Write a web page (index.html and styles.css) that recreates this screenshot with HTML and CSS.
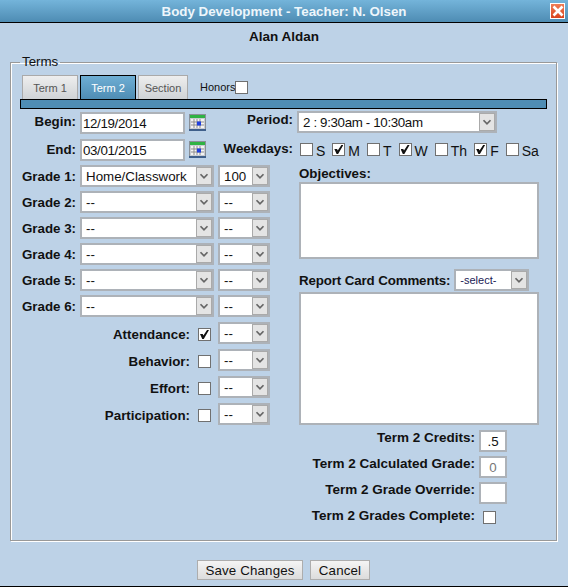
FILE: index.html
```html
<!DOCTYPE html>
<html lang="en">

<head>
    <meta charset="UTF-8">
    <title>Body Development - Teacher: N. Olsen</title>
    <link rel="stylesheet" href="styles.css">
</head>

<body>
    <div class="dialog">
        <div class="titlebar">
            <span class="title">Body Development - Teacher: N. Olsen</span>
            <button class="close" type="button" aria-label="Close">
                <svg width="12" height="12" viewBox="0 0 12 12">
                    <path d="M1.5 1.5 L10.5 10.5 M10.5 1.5 L1.5 10.5" stroke="#fff" stroke-width="2.6" fill="none" />
                </svg>
            </button>
        </div>

        <div class="student">Alan Aldan</div>

        <fieldset class="terms">
            <legend>Terms</legend>

            <div class="tabs">
                <a class="tab tab1" href="#">Term 1</a>
                <a class="tab tab2 active" href="#">Term 2</a>
                <a class="tab tab3" href="#">Section</a>
                <label class="honors">Honors <input type="checkbox"></label>
            </div>
            <div class="tabbar"></div>

            <!-- dates, period and weekdays -->
            <div class="toprow">
                <label class="lbl">Begin:</label>
                <input class="text date begin" type="text" value="12/19/2014">
                <svg class="cal begin" width="17" height="17" viewBox="0 0 17 17">
                    <rect x="0.5" y="0.5" width="16" height="16" fill="#c8ccd2" stroke="#8a9098" />
                    <rect x="1" y="1" width="15" height="3" fill="#2fb344" />
                    <rect x="2" y="5" width="13" height="9" fill="#f4f4f4" />
                    <path d="M5 5V14 M8 5V14 M11 5V14 M2 8H15 M2 11H15" stroke="#8d8d8d" stroke-width="1" />
                    <rect x="8" y="7.5" width="4" height="4" fill="#1f3fe0" />
                    <rect x="0" y="15" width="17" height="2" fill="#3f5f8a" />
                </svg>
                <label class="lbl right period-lbl">Period:</label>
                <div class="sel period">
                    <select>
                        <option>2 : 9:30am - 10:30am</option>
                    </select>
                    <svg class="arrow" width="16" height="18" viewBox="0 0 16 18"><path d="M4 7 L8 11 L12 7" /></svg>
                </div>
            </div>

            <div class="toprow second">
                <label class="lbl">End:</label>
                <input class="text date" type="text" value="03/01/2015">
                <svg class="cal" width="17" height="17" viewBox="0 0 17 17">
                    <rect x="0.5" y="0.5" width="16" height="16" fill="#c8ccd2" stroke="#8a9098" />
                    <rect x="1" y="1" width="15" height="3" fill="#2fb344" />
                    <rect x="2" y="5" width="13" height="9" fill="#f4f4f4" />
                    <path d="M5 5V14 M8 5V14 M11 5V14 M2 8H15 M2 11H15" stroke="#8d8d8d" stroke-width="1" />
                    <rect x="8" y="7.5" width="4" height="4" fill="#1f3fe0" />
                    <rect x="0" y="15" width="17" height="2" fill="#3f5f8a" />
                </svg>
                <label class="lbl right weekdays-lbl">Weekdays:</label>
                <div class="weekdays">
                    <label><input type="checkbox">S</label>
                    <label><input type="checkbox" checked>M</label>
                    <label><input type="checkbox">T</label>
                    <label><input type="checkbox" checked>W</label>
                    <label><input type="checkbox">Th</label>
                    <label><input type="checkbox" checked>F</label>
                    <label><input type="checkbox">Sa</label>
                </div>
            </div>

            <div class="columns">
                <div class="leftcol">
                    <div class="grade">
                        <label class="lbl">Grade 1:</label>
                        <div class="sel wide"><select><option>Home/Classwork</option></select><svg class="arrow" width="16" height="18" viewBox="0 0 16 18"><path d="M4 7 L8 11 L12 7" /></svg></div>
                        <div class="sel small"><select><option>100</option></select><svg class="arrow" width="16" height="18" viewBox="0 0 16 18"><path d="M4 7 L8 11 L12 7" /></svg></div>
                    </div>
                    <div class="grade">
                        <label class="lbl">Grade 2:</label>
                        <div class="sel wide"><select><option>--</option></select><svg class="arrow" width="16" height="18" viewBox="0 0 16 18"><path d="M4 7 L8 11 L12 7" /></svg></div>
                        <div class="sel small"><select><option>--</option></select><svg class="arrow" width="16" height="18" viewBox="0 0 16 18"><path d="M4 7 L8 11 L12 7" /></svg></div>
                    </div>
                    <div class="grade">
                        <label class="lbl">Grade 3:</label>
                        <div class="sel wide"><select><option>--</option></select><svg class="arrow" width="16" height="18" viewBox="0 0 16 18"><path d="M4 7 L8 11 L12 7" /></svg></div>
                        <div class="sel small"><select><option>--</option></select><svg class="arrow" width="16" height="18" viewBox="0 0 16 18"><path d="M4 7 L8 11 L12 7" /></svg></div>
                    </div>
                    <div class="grade">
                        <label class="lbl">Grade 4:</label>
                        <div class="sel wide"><select><option>--</option></select><svg class="arrow" width="16" height="18" viewBox="0 0 16 18"><path d="M4 7 L8 11 L12 7" /></svg></div>
                        <div class="sel small"><select><option>--</option></select><svg class="arrow" width="16" height="18" viewBox="0 0 16 18"><path d="M4 7 L8 11 L12 7" /></svg></div>
                    </div>
                    <div class="grade">
                        <label class="lbl">Grade 5:</label>
                        <div class="sel wide"><select><option>--</option></select><svg class="arrow" width="16" height="18" viewBox="0 0 16 18"><path d="M4 7 L8 11 L12 7" /></svg></div>
                        <div class="sel small"><select><option>--</option></select><svg class="arrow" width="16" height="18" viewBox="0 0 16 18"><path d="M4 7 L8 11 L12 7" /></svg></div>
                    </div>
                    <div class="grade">
                        <label class="lbl">Grade 6:</label>
                        <div class="sel wide"><select><option>--</option></select><svg class="arrow" width="16" height="18" viewBox="0 0 16 18"><path d="M4 7 L8 11 L12 7" /></svg></div>
                        <div class="sel small"><select><option>--</option></select><svg class="arrow" width="16" height="18" viewBox="0 0 16 18"><path d="M4 7 L8 11 L12 7" /></svg></div>
                    </div>

                    <div class="skills">
                        <div class="skill">
                            <label class="lbl">Attendance:</label>
                            <input type="checkbox" checked>
                            <div class="sel small"><select><option>--</option></select><svg class="arrow" width="16" height="18" viewBox="0 0 16 18"><path d="M4 7 L8 11 L12 7" /></svg></div>
                        </div>
                        <div class="skill">
                            <label class="lbl">Behavior:</label>
                            <input type="checkbox">
                            <div class="sel small"><select><option>--</option></select><svg class="arrow" width="16" height="18" viewBox="0 0 16 18"><path d="M4 7 L8 11 L12 7" /></svg></div>
                        </div>
                        <div class="skill">
                            <label class="lbl">Effort:</label>
                            <input type="checkbox">
                            <div class="sel small"><select><option>--</option></select><svg class="arrow" width="16" height="18" viewBox="0 0 16 18"><path d="M4 7 L8 11 L12 7" /></svg></div>
                        </div>
                        <div class="skill">
                            <label class="lbl">Participation:</label>
                            <input type="checkbox">
                            <div class="sel small"><select><option>--</option></select><svg class="arrow" width="16" height="18" viewBox="0 0 16 18"><path d="M4 7 L8 11 L12 7" /></svg></div>
                        </div>
                    </div>
                </div>

                <div class="rightcol">
                    <label class="lbl objectives-lbl">Objectives:</label>
                    <textarea class="objectives"></textarea>

                    <div class="comments-head">
                        <label class="lbl">Report Card Comments:</label>
                        <div class="sel comment-sel"><select><option>-select-</option></select><svg class="arrow" width="16" height="18" viewBox="0 0 16 18"><path d="M4 7 L8 11 L12 7" /></svg></div>
                    </div>
                    <textarea class="comments"></textarea>

                    <div class="credit">
                        <label class="lbl">Term 2 Credits:</label>
                        <input class="text num" type="text" value=".5">
                    </div>
                    <div class="credit">
                        <label class="lbl">Term 2 Calculated Grade:</label>
                        <input class="text num calc" type="text" value="0" readonly>
                    </div>
                    <div class="credit">
                        <label class="lbl">Term 2 Grade Override:</label>
                        <input class="text num" type="text">
                    </div>
                    <div class="credit complete">
                        <label class="lbl">Term 2 Grades Complete:</label>
                        <input type="checkbox">
                    </div>
                </div>
            </div>
        </fieldset>

        <div class="footer">
            <button class="btn save" type="button">Save Changes</button>
            <button class="btn cancel" type="button">Cancel</button>
        </div>
    </div>
</body>

</html>
```

FILE: styles.css
```css
html,
body {
    margin: 0;
    padding: 0;
}

body {
    background-color: #bdd2e7;
    color: #111;
    font-family: "Liberation Sans", Arial, sans-serif;
    font-size: 13.33px;
}

.dialog {
    box-sizing: border-box;
    width: 568px;
    height: 587px;
    border-bottom: 1px solid black;
    overflow: hidden;
}

.titlebar {
    display: flex;
    justify-content: center;
    align-items: center;
    position: relative;
    height: 22px;
    border-bottom: 1px solid black;
    background: linear-gradient(#74b4da, #4e8cb3);
}

.title {
    color: #eef6fb;
    font-size: 13.33px;
    font-weight: bold;
}

.close {
    position: absolute;
    top: 3px;
    right: 3px;
    display: flex;
    align-items: center;
    justify-content: center;
    box-sizing: border-box;
    width: 15px;
    height: 16px;
    padding: 0;
    border: 1px solid #fff;
    background: linear-gradient(#ef7d55, #d9441f);
}

.student {
    height: 27px;
    line-height: 27px;
    text-align: center;
    font-weight: bold;
    font-size: 13.5px;
}

/* terms box */
.terms {
    box-sizing: border-box;
    width: 547px;
    margin: 4px 0 0 10px;
    padding: 5px 9px 6px 9px;
    border: 1px solid #999;
    box-shadow: 1px 1px 0 #fff, inset 1px 1px 0 #fff;
    min-inline-size: 0;
}

.terms legend {
    padding: 0 2px;
    margin-left: 0;
    font-size: 13.33px;
    line-height: 16px;
}

.tabs {
    display: flex;
    align-items: flex-end;
    height: 24px;
    padding-left: 2px;
}

.tab {
    box-sizing: border-box;
    display: block;
    height: 24px;
    line-height: 24px;
    margin-right: 2px;
    border: 1px solid #aaa;
    border-bottom: none;
    background: linear-gradient(#eeeeee, #cfd3d6);
    color: #555;
    font-size: 11px;
    text-align: center;
    text-decoration: none;
}

.tab1,
.tab2 {
    width: 56px;
}

.tab3 {
    width: 50px;
}

.tab.active {
    border: 1px solid black;
    border-bottom: none;
    background: linear-gradient(#6eaed4, #4f8db4);
    color: #fff;
}

.honors {
    display: flex;
    align-items: center;
    margin-left: 10px;
    height: 24px;
    font-size: 11px;
}

.honors input {
    margin: 5px 0 0 3px;
}

.tabbar {
    box-sizing: border-box;
    height: 10px;
    border: 1px solid black;
    background-color: #4f8db4;
}

/* shared controls */
.lbl {
    font-weight: bold;
    font-size: 13.33px;
    text-align: right;
}

.text {
    box-sizing: border-box;
    height: 22px;
    margin: 0;
    padding: 0 1px;
    border: 2px solid #adb2b8;
    background-color: white;
    color: #111;
    font-family: "Liberation Sans", Arial, sans-serif;
    font-size: 13.33px;
    outline: none;
}

input[type="checkbox"] {
    appearance: none;
    position: relative;
    flex: none;
    box-sizing: border-box;
    width: 13px;
    height: 13px;
    margin: 0;
    border: 1px solid #707070;
    background-color: white;
}

input[type="checkbox"]:checked::after {
    content: "";
    position: absolute;
    left: 1px;
    top: 1px;
    width: 9px;
    height: 9px;
    background-color: #111;
    clip-path: polygon(0 45%, 30% 45%, 38% 62%, 78% 0, 100% 0, 42% 100%, 25% 100%);
}

.sel {
    position: relative;
    flex: none;
    height: 22px;
}

.sel select {
    appearance: none;
    display: block;
    box-sizing: border-box;
    width: 100%;
    height: 22px;
    margin: 0;
    padding: 0 20px 0 4px;
    border: 2px solid #adb2b8;
    border-radius: 0;
    background-color: white;
    color: #111;
    font-family: "Liberation Sans", Arial, sans-serif;
    font-size: 13.33px;
}

.arrow {
    position: absolute;
    top: 2px;
    right: 2px;
    box-sizing: border-box;
    border: 1px solid #aaa;
    background-color: #e4e4e4;
    pointer-events: none;
}

.arrow path {
    fill: none;
    stroke: #666;
    stroke-width: 2;
}

.wide {
    width: 134px;
}

.small {
    width: 52px;
}

/* top rows */
.toprow {
    display: flex;
    align-items: flex-start;
    height: 28px;
    margin-top: 2px;
}

.toprow.second {
    height: 26px;
    margin-top: 0;
}

.toprow .lbl {
    width: 56px;
    line-height: 22px;
}

.date {
    width: 105px;
    margin-left: 4px;
    letter-spacing: -0.35px;
}

.date.begin {
    margin-top: 1px;
}

.cal {
    flex: none;
    margin: 2px 0 0 4px;
}

.cal.begin {
    margin-top: 3px;
}

.toprow .period-lbl {
    width: 87px;
    line-height: 17px;
}

.toprow .weekdays-lbl {
    width: 87px;
    line-height: 20px;
}

.period {
    width: 200px;
    margin-left: 4px;
}

.period select {
    letter-spacing: -0.35px;
}

.weekdays {
    display: flex;
    gap: 7px;
    margin: 4px 0 0 7px;
}

.weekdays label {
    display: flex;
    align-items: flex-start;
    gap: 3px;
    font-size: 14px;
    line-height: 16px;
}

/* lower part */
.columns {
    display: flex;
    gap: 29px;
}

.leftcol {
    width: 250px;
}

.grade {
    display: flex;
    align-items: center;
    gap: 4px;
    margin-bottom: 4px;
}

.grade .lbl {
    width: 56px;
}

.skills {
    margin-top: 5px;
}

.skill {
    display: flex;
    align-items: flex-start;
    height: 22px;
    margin-bottom: 5px;
}

.skill .lbl {
    width: 170px;
    margin-right: 8px;
    line-height: 22px;
    padding-top: 2px;
}

.skill input {
    margin: 6px 7px 0 0;
}

.rightcol {
    width: 240px;
}

.objectives-lbl {
    display: block;
    line-height: 17px;
    text-align: left;
}

textarea {
    display: block;
    box-sizing: border-box;
    width: 240px;
    margin: 0;
    border: 2px solid #adb2b8;
    border-radius: 0;
    background-color: white;
    resize: none;
}

.objectives {
    height: 77px;
}

.comments-head {
    display: flex;
    align-items: center;
    gap: 4px;
    height: 22px;
    margin-top: 10px;
    margin-bottom: 1px;
}

.comments-head .lbl {
    letter-spacing: -0.13px;
}

.comment-sel {
    width: 75px;
}

.comment-sel select {
    font-size: 11px;
    color: #1a1a55;
}

.comments {
    height: 133px;
    margin-bottom: 5px;
}

.credit {
    display: flex;
    justify-content: flex-end;
    align-items: flex-start;
    gap: 4px;
    height: 26px;
    padding-right: 32px;
}

.credit .lbl {
    font-size: 13.5px;
    line-height: 16px;
}

.num {
    width: 28px;
    padding: 0;
    text-align: center;
}

.calc {
    color: #777;
}

.complete input {
    margin: 3px 11px 0 4px;
}

/* buttons */
.footer {
    display: flex;
    justify-content: center;
    gap: 7px;
    margin-top: 19px;
    padding-right: 1px;
}

.btn {
    box-sizing: border-box;
    height: 20px;
    padding: 0;
    border: 1px solid #adadad;
    background: linear-gradient(#f4f4f4, #dcdcdc);
    color: #111;
    font-family: "Liberation Sans", Arial, sans-serif;
    font-size: 13.33px;
    letter-spacing: 0.15px;
}

.save {
    width: 106px;
}

.cancel {
    width: 60px;
}
```
